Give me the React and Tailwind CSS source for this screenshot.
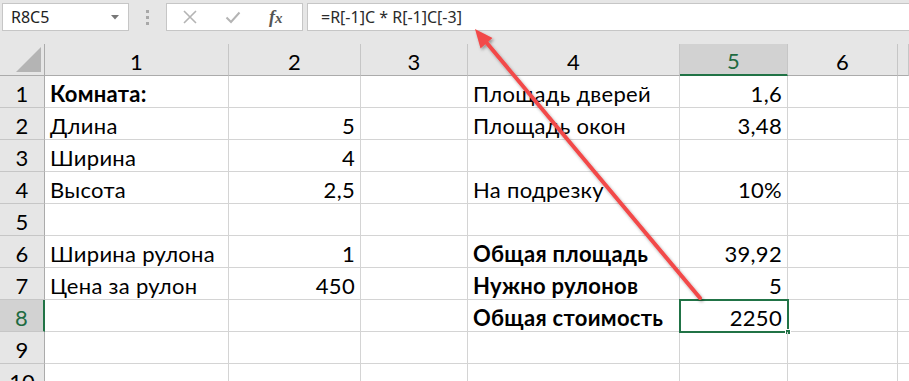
const COLS = ['1', '2', '3', '4', '5', '6', '']

const ROWS = [
  { n: 1, a: 'Комната:', ab: true, d: 'Площадь дверей', e: '1,6' },
  { n: 2, a: 'Длина', b: '5', d: 'Площадь окон', e: '3,48' },
  { n: 3, a: 'Ширина', b: '4' },
  { n: 4, a: 'Высота', b: '2,5', d: 'На подрезку', e: '10%' },
  { n: 5 },
  { n: 6, a: 'Ширина рулона', b: '1', d: 'Общая площадь', db: true, e: '39,92' },
  { n: 7, a: 'Цена за рулон', b: '450', d: 'Нужно рулонов', db: true, e: '5' },
  { n: 8, d: 'Общая стоимость', db: true, e: '2250', sel: true },
  { n: 9 },
  { n: 10 },
]

const cell = 'h-[32px] border-r border-b border-[#d4d4d4] flex items-center pt-[3px] px-[5px] whitespace-nowrap overflow-hidden tracking-[0.3px]'

const FormulaBar = () => (
  <div className="h-[44px] bg-[#e6e6e6] flex items-start pt-[3px]">
    <div className="ml-[2px] w-[127px] h-[28px] bg-white border border-[#c6c6c6] flex items-center justify-between pl-[8px] pr-[9px]">
      <span className="text-[16px] text-[#222]" style={{ fontFamily: '"Noto Sans", sans-serif' }}>R8C5</span>
      <svg width="8" height="5" viewBox="0 0 8 5"><path d="M0 0h8L4 4.5z" fill="#777" /></svg>
    </div>
    <div className="w-[37px] h-[28px] flex flex-col items-center justify-center gap-[3px]">
      <div className="w-[3px] h-[3px] bg-[#a8a8a8]" />
      <div className="w-[3px] h-[3px] bg-[#a8a8a8]" />
      <div className="w-[3px] h-[3px] bg-[#a8a8a8]" />
    </div>
    <div className="w-[137px] h-[28px] bg-white border border-[#c6c6c6] flex items-center">
      <svg className="ml-[15px]" width="16" height="16" viewBox="0 0 16 16">
        <path d="M2 2L14 14M14 2L2 14" stroke="#b4b4b4" strokeWidth="1.6" fill="none" />
      </svg>
      <svg className="ml-[27px]" width="16" height="16" viewBox="0 0 16 16">
        <path d="M1.5 8.5L6 13L14.5 3.5" stroke="#b4b4b4" strokeWidth="2" fill="none" />
      </svg>
      <span className="ml-[28px] italic font-bold text-[18px] text-[#555] leading-none" style={{ fontFamily: '"Liberation Serif", serif' }}>
        f<span className="text-[15px]">x</span>
      </span>
    </div>
    <div className="ml-[4px] flex-1 h-[28px] bg-white border border-r-0 border-[#c6c6c6] flex items-center pl-[13px]">
      <span className="text-[16px] text-[#2b2b2b]" style={{ fontFamily: '"Noto Sans", sans-serif' }}>=R[-1]C * R[-1]C[-3]</span>
    </div>
  </div>
)

const Arrow = () => (
  <svg className="absolute inset-0 pointer-events-none" width="909" height="381" viewBox="0 0 909 381">
    <defs>
      <filter id="sh" x="-20%" y="-20%" width="140%" height="140%">
        <feDropShadow dx="1.5" dy="2" stdDeviation="1.5" floodColor="#000" floodOpacity="0.35" />
      </filter>
    </defs>
    <g filter="url(#sh)">
      <line x1="700" y1="298" x2="486" y2="42" stroke="#f24a4a" strokeWidth="4" strokeLinecap="round" />
      <polygon points="475,29 492.5,38 480.5,48.5" fill="#f24a4a" />
    </g>
  </svg>
)

export default function App() {
  return (
    <div className="relative w-[909px] h-[381px] overflow-hidden bg-white" style={{ fontFamily: 'Lato, sans-serif' }}>
      <FormulaBar />
      <div className="grid grid-cols-[45px_184px_132px_107px_212px_108px_110px_1fr] text-[22px] text-black">
        {/* header row */}
        <div className="h-[32px] bg-[#e6e6e6] border-r border-b border-[#ababab] flex items-end justify-end pr-[3px] pb-[3px]">
          <svg width="25" height="25" viewBox="0 0 25 25"><path d="M25 0V25H0z" fill="#b4b4b4" /></svg>
        </div>
        {COLS.map((c, i) => (
          <div
            key={i}
            className={`h-[32px] flex items-center justify-center pt-[3px] border-r border-[#c6c6c6] ${
              c === '5'
                ? 'bg-[#d2d2d2] text-[#1e6b41] border-b-2 border-b-[#217346]'
                : 'bg-[#e6e6e6] border-b border-b-[#ababab]'
            }`}
          >
            {c}
          </div>
        ))}

        {ROWS.map(r => (
          <div key={r.n} className="contents">
            <div
              className={`h-[32px] flex items-center justify-center pt-[3px] border-b border-[#c6c6c6] ${
                r.sel
                  ? 'bg-[#d2d2d2] text-[#1e6b41] border-r-2 border-r-[#217346]'
                  : 'bg-[#e6e6e6] border-r border-r-[#ababab]'
              }`}
            >
              {r.n}
            </div>
            <div className={`${cell} ${r.ab ? 'font-bold' : ''}`}>{r.a}</div>
            <div className={`${cell} justify-end`}>{r.b}</div>
            <div className={cell} />
            <div className={`${cell} ${r.db ? 'font-bold' : ''}`}>{r.d}</div>
            <div className={`${cell} justify-end relative overflow-visible`}>
              {r.e}
              {r.sel && (
                <div className="absolute -left-[1px] -top-[1px] w-[110px] h-[34px] border-2 border-[#217346]">
                  <div className="absolute -right-[4px] -bottom-[4px] w-[6px] h-[6px] bg-[#217346] border border-white" />
                </div>
              )}
            </div>
            <div className={cell} />
            <div className="h-[32px] border-b border-[#d4d4d4]" />
          </div>
        ))}
      </div>
      <Arrow />
    </div>
  )
}
